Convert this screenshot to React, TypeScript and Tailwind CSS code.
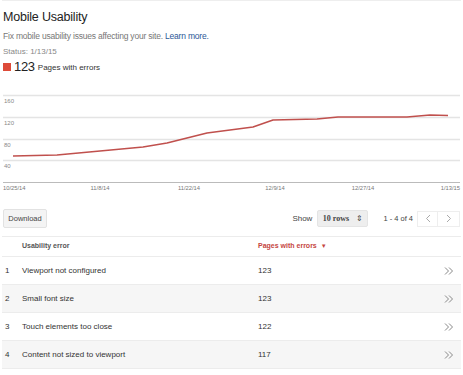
import React from 'react'

const rows = [
  { n: 1, name: 'Viewport not configured', count: 123 },
  { n: 2, name: 'Small font size', count: 123 },
  { n: 3, name: 'Touch elements too close', count: 122 },
  { n: 4, name: 'Content not sized to viewport', count: 117 },
]

const pts: [number, number][] = [
  [13, 156], [57, 155], [100, 151], [143, 147], [167, 143], [187, 138], [207, 133],
  [230, 130], [253, 127], [273, 120], [317, 119], [338, 117], [407, 117], [430, 115], [448, 115.5],
]

const font = '"Liberation Sans", Arial, sans-serif'

const Chart = () => {
  const top = 88
  const line = pts.map(([x, y]) => `${x},${y - top}`).join(' ')
  const grid = [
    { y: 95, label: '160' },
    { y: 117, label: '120' },
    { y: 139, label: '80' },
    { y: 160, label: '40' },
  ]
  const xl = [
    { x: 3, t: '10/25/14', a: 'start' },
    { x: 100, t: '11/8/14', a: 'middle' },
    { x: 189, t: '11/22/14', a: 'middle' },
    { x: 275, t: '12/9/14', a: 'middle' },
    { x: 363, t: '12/27/14', a: 'middle' },
    { x: 460, t: '1/13/15', a: 'end' },
  ]
  return (
    <svg width="463" height="106" className="block" style={{ fontFamily: font }}>
      {grid.map((g) => (
        <g key={g.label}>
          <line x1="3" x2="460" y1={g.y - top + 0.5} y2={g.y - top + 0.5} stroke="#e4e4e4" strokeWidth="1.5" />
          <text x="4" y={g.y - top + 7.5} fontSize="6" fill="#888">{g.label}</text>
        </g>
      ))}
      <line x1="3" x2="460" y1={182.5 - top} y2={182.5 - top} stroke="#bbb" strokeWidth="1" />
      {xl.map((l) => (
        <text key={l.t} x={l.x} y={101.5} fontSize="5.8" fill="#777" textAnchor={l.a as any}>{l.t}</text>
      ))}
      <polyline points={line} fill="none" stroke="#c0504d" strokeWidth="1.6" strokeLinejoin="round" />
    </svg>
  )
}

const Chevrons = () => (
  <svg width="10" height="8" viewBox="0 0 10 8">
    <path d="M1 0.5 L4.5 4 L1 7.5 M5 0.5 L8.5 4 L5 7.5" fill="none" stroke="#888" strokeWidth="1" />
  </svg>
)

export default function App() {
  return (
    <div className="w-[463px] h-[375px] bg-white text-[#222] overflow-hidden" style={{ fontFamily: font }}>
      <div className="border-t border-[#eee] mx-[2px]" />
      <div className="h-[87px] px-[3px] pt-[7px]">
        <h1 className="text-[12.5px] leading-[18px] tracking-[-0.2px] text-[#222]">Mobile Usability</h1>
        <p className="text-[8.5px] leading-[12px] tracking-[-0.2px] text-[#777] mt-[4px]">
          Fix mobile usability issues affecting your site. <span className="text-[#2b5797]">Learn more.</span>
        </p>
        <p className="text-[8px] leading-[12px] text-[#888] mt-[4px]">Status: 1/13/15</p>
        <div className="flex items-center mt-[2px] h-[14px]">
          <span className="w-[8px] h-[8px] bg-[#dd4b39] mr-[3px]" />
          <span className="text-[13px] leading-[14px] tracking-[-0.3px] text-[#222]">123</span>
          <span className="text-[8px] ml-[3px] text-[#333] mt-[2px]">Pages with errors</span>
        </div>
      </div>
      <Chart />
      <div className="flex items-center justify-between pl-[3px] pr-[3px] mt-[15px] h-[19px]">
        <button className="h-[19px] w-[44px] text-[7.5px] text-[#444] bg-[#f4f4f4] border border-[#e2e2e2] rounded-[2px]">Download</button>
        <div className="flex items-center text-[8px] text-[#444]">
          <span className="mr-[5px]">Show</span>
          <span className="h-[17px] w-[51px] bg-[#eee] border border-[#e4e4e4] rounded-[2px] flex items-center justify-center gap-[7px] font-bold text-[8px] text-[#444]" style={{ fontFamily: '"Liberation Serif", serif' }}>
            10 rows <span className="text-[8px] leading-[8px] font-normal" style={{ fontFamily: '"Liberation Sans", sans-serif' }}>⇕</span>
          </span>
          <span className="ml-[15px] mr-[4px] text-[7.5px]">1 - 4 of 4</span>
          <span className="flex">
            <span className="w-[21px] h-[16px] border border-[#eee] flex items-center justify-center">
              <svg width="6" height="9" viewBox="0 0 6 9"><path d="M5 1 L1.5 4.5 L5 8" fill="none" stroke="#aaa" strokeWidth="1" /></svg>
            </span>
            <span className="w-[22px] h-[16px] border border-l-0 border-[#eee] flex items-center justify-center">
              <svg width="6" height="9" viewBox="0 0 6 9"><path d="M1 1 L4.5 4.5 L1 8" fill="none" stroke="#aaa" strokeWidth="1" /></svg>
            </span>
          </span>
        </div>
      </div>
      <div className="mt-[8px] mx-[2px]">
        <div className="flex items-center h-[21px] border-t border-b border-[#ececec] text-[7px] font-bold">
          <span className="w-[20px]" />
          <span className="flex-1 text-[#555]">Usability error</span>
          <span className="w-[203px] text-[#c5463f]">Pages with errors <span className="text-[6px] ml-[2px]">▼</span></span>
        </div>
        {rows.map((r, i) => (
          <div key={r.n} className={`flex items-center h-[28px] border-b border-[#ececec] text-[8px] text-[#333] ${i % 2 === 1 ? 'bg-[#f6f6f6]' : 'bg-white'}`}>
            <span className="w-[20px] pl-[3px]">{r.n}</span>
            <span className="flex-1">{r.name}</span>
            <span className="w-[186px]">{r.count}</span>
            <span className="w-[17px] flex items-center"><Chevrons /></span>
          </div>
        ))}
      </div>
    </div>
  )
}
